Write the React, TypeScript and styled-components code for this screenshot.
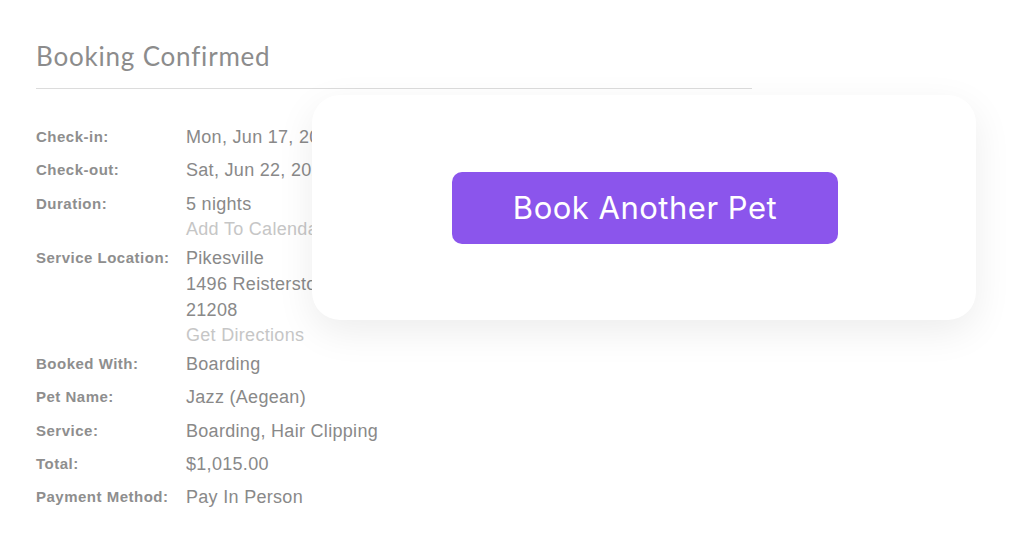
import React from 'react'
import styled, { createGlobalStyle } from 'styled-components'

const GlobalStyle = createGlobalStyle`
  body {
    margin: 0;
    background: #ffffff;
  }
`

type Detail = {
  label: string
  lines: string[]
  link?: string
}

const details: Detail[] = [
  { label: 'Check-in:', lines: ['Mon, Jun 17, 2024'] },
  { label: 'Check-out:', lines: ['Sat, Jun 22, 2024'] },
  { label: 'Duration:', lines: ['5 nights'], link: 'Add To Calendar' },
  {
    label: 'Service Location:',
    lines: ['Pikesville', '1496 Reisterstown Road, Baltimore, MD', '21208'],
    link: 'Get Directions',
  },
  { label: 'Booked With:', lines: ['Boarding'] },
  { label: 'Pet Name:', lines: ['Jazz (Aegean)'] },
  { label: 'Service:', lines: ['Boarding, Hair Clipping'] },
  { label: 'Total:', lines: ['$1,015.00'] },
  { label: 'Payment Method:', lines: ['Pay In Person'] },
]

export default function App() {
  return (
    <Page>
      <GlobalStyle />
      <Summary>
        <Title>Booking Confirmed</Title>
        <Divider />
        <DetailList>
          {details.map((d) => (
            <DetailRow key={d.label}>
              <Label>{d.label}</Label>
              <Values>
                {d.lines.map((line) => (
                  <Value key={line}>{line}</Value>
                ))}
                {d.link && <LinkText>{d.link}</LinkText>}
              </Values>
            </DetailRow>
          ))}
        </DetailList>
      </Summary>
      <ActionCard>
        <PrimaryButton>Book Another Pet</PrimaryButton>
      </ActionCard>
    </Page>
  )
}

const Page = styled.div`
  position: relative;
  width: 1026px;
  height: 546px;
  overflow: hidden;
  background: #ffffff;
`

const Summary = styled.div`
  width: 716px;
  padding: 40px 0 0 36px;
`

const Title = styled.h1`
  margin: 0;
  font-family: 'Lato', 'Open Sans', sans-serif;
  font-weight: 400;
  font-size: 26px;
  line-height: 32px;
  color: #8c8c8c;
  letter-spacing: 0.8px;
`

const Divider = styled.div`
  height: 1px;
  margin-top: 16px;
  background: #dcdcdc;
`

const DetailList = styled.div`
  display: flex;
  flex-direction: column;
  gap: 7.3px;
  margin-top: 35px;
`

const DetailRow = styled.div`
  display: grid;
  grid-template-columns: 150px 1fr;
  align-items: start;
`

const Label = styled.div`
  font-family: 'Liberation Sans', Arial, sans-serif;
  font-weight: 700;
  font-size: 15px;
  line-height: 26px;
  letter-spacing: 0.5px;
  color: #8e8e8e;
  white-space: nowrap;
`

const Values = styled.div`
  display: flex;
  flex-direction: column;
`

const Value = styled.div`
  font-family: 'Liberation Sans', Arial, sans-serif;
  font-size: 18px;
  line-height: 26px;
  letter-spacing: 0.3px;
  color: #898989;
  white-space: nowrap;
`

const LinkText = styled.div`
  margin-top: 3px;
  font-family: 'Liberation Sans', Arial, sans-serif;
  font-size: 18px;
  line-height: 18px;
  letter-spacing: 0.3px;
  color: #c6c6c6;
  white-space: nowrap;
`

const ActionCard = styled.div`
  position: absolute;
  left: 312px;
  top: 95px;
  width: 664px;
  height: 225px;
  box-sizing: border-box;
  border-radius: 28px;
  background: #ffffff;
  box-shadow: 0 12px 38px rgba(0, 0, 0, 0.075);
  display: flex;
  align-items: center;
  justify-content: center;
`

const PrimaryButton = styled.button`
  width: 386px;
  height: 72px;
  margin-left: 2px;
  border: none;
  border-radius: 10px;
  background: #8b55ec;
  color: #ffffff;
  font-family: 'Inter', 'Roboto', sans-serif;
  font-weight: 400;
  font-size: 31px;
  letter-spacing: 0.5px;
  cursor: pointer;
`
